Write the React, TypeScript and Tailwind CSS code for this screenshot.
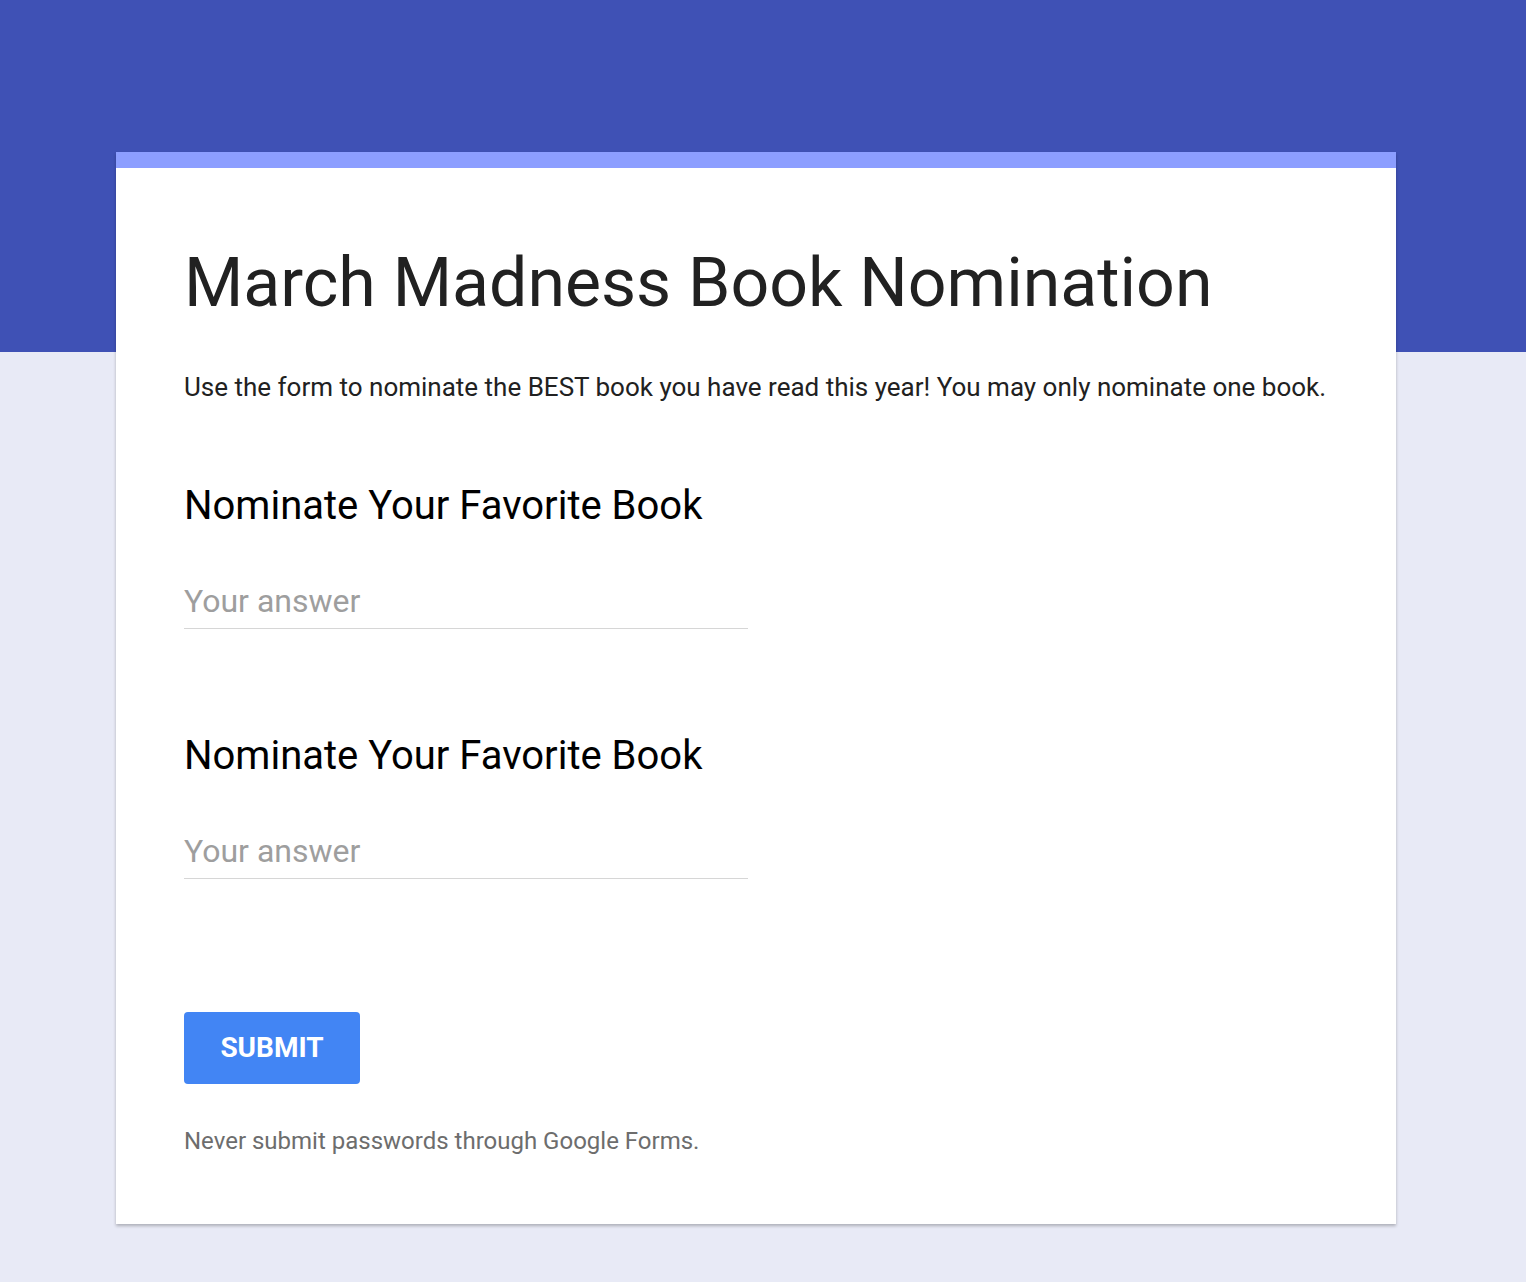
import * as React from "react"

function Question({ label }: { label: string }) {
  return (
    <div className="flex flex-col">
      <h2 className="text-[40px] leading-[48px] text-black">{label}</h2>
      <div className="mt-[53px] w-[564px] border-b border-[#d6d6d6] pb-[9px]">
        <span className="block text-[32px] leading-[36px] text-[#9e9e9e]">Your answer</span>
      </div>
    </div>
  )
}

export default function App() {
  return (
    <div
      className="relative min-h-[1282px] w-full bg-[#e8eaf6]"
      style={{ fontFamily: "Roboto, 'Liberation Sans', sans-serif" }}
    >
      {/* header band */}
      <div className="absolute inset-x-0 top-0 h-[352px] bg-[#3f51b5]" />

      <div className="relative flex pl-[116px] pt-[152px]">
        <div className="w-[1280px] bg-white shadow-[0_2px_3px_rgba(0,0,0,0.25)]">
          <div className="h-[16px] bg-[#8c9eff]" />
          <div className="px-[68px] pb-[69px] pt-[75px]">
            <h1 className="text-[68px] leading-[80px] text-[#212121]">March Madness Book Nomination</h1>
            <p className="mt-[48px] text-[26px] leading-[32px] text-[#212121]">
              Use the form to nominate the BEST book you have read this year! You may only nominate one book.
            </p>

            <div className="mt-[79px] flex flex-col gap-[103px]">
              <Question label="Nominate Your Favorite Book" />
              <Question label="Nominate Your Favorite Book" />
            </div>

            <button className="mt-[133px] flex h-[72px] w-[176px] items-center justify-center rounded-[4px] bg-[#4285f4] text-[28px] font-bold text-white">
              SUBMIT
            </button>

            <p className="mt-[43px] text-[24px] leading-[28px] text-[#6d6d6d]">Never submit passwords through Google Forms.</p>
          </div>
        </div>
      </div>
    </div>
  )
}
